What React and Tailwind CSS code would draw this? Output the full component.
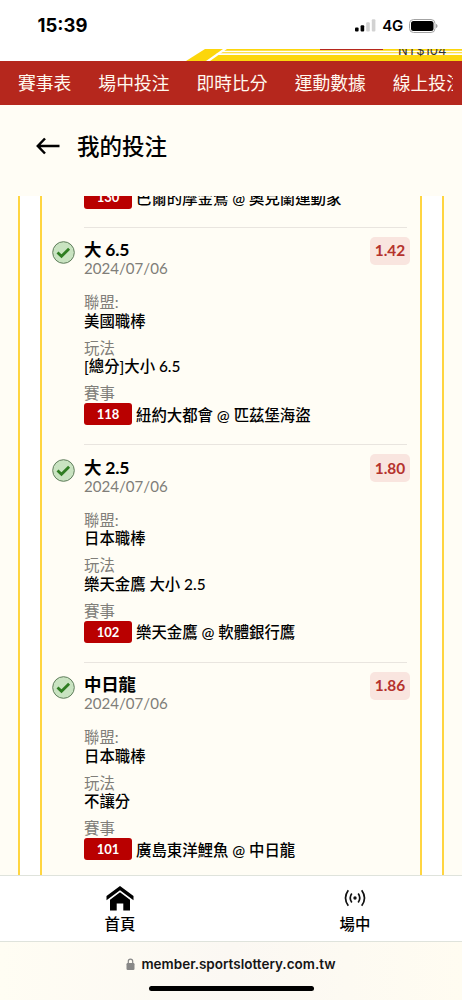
import React from 'react';

const navItems = ['賽事表', '場中投注', '即時比分', '運動數據', '線上投注'];

const bets = [
  { pick: '大 6.5', date: '2024/07/06', odds: '1.42', league: '美國職棒', play: '[總分]大小 6.5', code: '118', match: '紐約大都會 @ 匹茲堡海盜' },
  { pick: '大 2.5', date: '2024/07/06', odds: '1.80', league: '日本職棒', play: '樂天金鷹 大小 2.5', code: '102', match: '樂天金鷹 @ 軟體銀行鷹' },
  { pick: '中日龍', date: '2024/07/06', odds: '1.86', league: '日本職棒', play: '不讓分', code: '101', match: '廣島東洋鯉魚 @ 中日龍' },
];

const StatusBar = () => (
  <div className="flex h-[49px] shrink-0 items-center justify-between bg-white pl-[37.500px] pr-[24px] pt-[2px] font-['Inter']">
    <span className="text-[18.500px] font-bold leading-none">15:39</span>
    <div className="flex items-center">
      <svg width="21" height="13" viewBox="0 0 21 13">
        <rect x="0" y="8.500" width="3.600" height="4" rx="1" />
        <rect x="5.600" y="6.300" width="3.600" height="6.200" rx="1" />
        <rect x="11.200" y="3.300" width="3.600" height="9.200" rx="1" fill="#d2d2d2" />
        <rect x="16.800" y="0.300" width="3.600" height="12.200" rx="1" fill="#d2d2d2" />
      </svg>
      <span className="ml-[6px] text-[15px] font-semibold leading-none tracking-[-0.3px]">4G</span>
      <svg className="ml-[6px]" width="29" height="14" viewBox="0 0 29 14">
        <rect x="0.500" y="0.500" width="25.500" height="13" rx="4" fill="none" stroke="#a3a3a3" />
        <rect x="2" y="2" width="22.500" height="10" rx="2.500" />
        <path d="M27 5v4c1-.4 1.500-1.100 1.500-2s-.5-1.600-1.500-2z" fill="#a3a3a3" />
      </svg>
    </div>
  </div>
);

// Parte inferior de la cabecera, cortada por el scroll
const Banner = () => (
  <div className="relative h-[12px] shrink-0 overflow-hidden bg-white">
    <svg className="block" width="462" height="12" viewBox="0 0 462 12">
      <path d="M205 0H462V12H186z" fill="#fcd60c" />
      <path d="M223 1.700H462V3.300H221z" fill="#fff" />
      <path d="M217 4.200H462V6H216z" fill="#fff" />
      <path d="M223 0h4l-17 12h-4z" fill="#fff" />
      <path d="M320 0h63v1h-63z" fill="#b5271d" />
    </svg>
    <span className="absolute left-[398px] top-[-6px] font-['Inter'] text-[13px] leading-[14px] text-[#333]">NT$104</span>
  </div>
);

const CheckBadge = () => (
  <svg className="mt-[14.500px] shrink-0" width="23" height="23" viewBox="0 0 23 23">
    <circle cx="11.500" cy="11.500" r="10.800" fill="#c9e3c1" stroke="#5f7d5b" strokeWidth="1" />
    <path d="M5.500 11.500l4 3.800 7.600-7.600" fill="none" stroke="#2f7d22" strokeWidth="2.800" />
  </svg>
);

const Match = ({ code, name }) => (
  <div className="flex h-[22px] items-center whitespace-nowrap">
    <span className="flex h-[22px] w-[48px] items-center justify-center rounded-[3px] bg-[#b90000] pt-px text-[13px] font-bold text-white">{code}</span>
    <span className="ml-[4px] pt-[2px] text-[15.400px] font-medium text-black">{name}</span>
  </div>
);

const Field = ({ label, value }) => (
  <div className="mb-[8.500px] leading-[18.500px]">
    <p className="text-[#807e79]">{label}</p>
    <p className="font-medium text-black">{value}</p>
  </div>
);

const Bet = ({ bet }) => (
  <div className="flex h-[217.500px] gap-[9px] pl-[10px] pr-[13px] text-[15.400px]">
    <CheckBadge />
    <div className="flex-1 border-t border-[#e9e5df]">
      <div className="flex justify-between pt-[13.500px]">
        <div className="leading-[18px]">
          <h2 className="text-[17.500px] font-bold tracking-[-0.2px] text-black">{bet.pick}</h2>
          <p className="text-[15.100px] text-[#807e79]">{bet.date}</p>
        </div>
        <span className="-mr-[3px] -mt-[4.500px] flex h-[28px] w-[40px] items-center justify-center rounded-[5px] bg-[#f9e5df] pt-px font-bold text-[#b5322c]">{bet.odds}</span>
      </div>
      <div className="mt-[16.300px]">
        <Field label="聯盟:" value={bet.league} />
        <Field label="玩法" value={bet.play} />
        <p className="mb-[0.700px] leading-[18.500px] text-[#807e79]">賽事</p>
        <Match code={bet.code} name={bet.match} />
      </div>
    </div>
  </div>
);

const App = () => {
  return (
    <div className="flex h-[1000px] w-[462px] flex-col overflow-hidden bg-[#fffdf5] font-['Lato','Noto_Sans_CJK_TC',sans-serif] text-black">
      <StatusBar />
      <Banner />

      {/* MENÚ */}
      <nav className="h-[44px] shrink-0 bg-[#b5271d] pl-[18px] pr-[9px]">
        <div className="flex h-full items-center gap-[27px] overflow-hidden whitespace-nowrap text-[17.800px] text-[#fff8ee]">
          {navItems.map((item) => (
            <span key={item}>{item}</span>
          ))}
        </div>
      </nav>

      <header className="flex h-[91px] shrink-0 items-center gap-[17px] pb-[8px] pl-[36px]">
        <svg className="-mt-[2px]" width="24" height="18" viewBox="0 0 24 18" fill="none" stroke="#000" strokeWidth="2.500">
          <path d="M1.500 9H23.500M9 1.500L1.800 9L9 16.500" />
        </svg>
        <h1 className="pt-px text-[22.500px] font-medium leading-none">我的投注</h1>
      </header>

      {/* LISTA DE APUESTAS */}
      <main className="mx-[18px] h-[679px] shrink-0 overflow-hidden border-x-2 border-[#ffd541] bg-white px-[20px]">
        <div className="flow-root h-full w-[382px] overflow-hidden border-x-2 border-[#ffd541] bg-[#fffdf5]">
          <div className="-mt-[9.500px] mb-[18px] pl-[42px]">
            <Match code="130" name="巴爾的摩金鶯 @ 奧克蘭運動家" />
          </div>
          {bets.map((bet) => (
            <Bet key={bet.code} bet={bet} />
          ))}
        </div>
      </main>

      <footer className="flex h-[67px] shrink-0 border-y border-[#dfe3dc] bg-white text-[15.400px] font-medium">
        <div className="flex w-[240px] shrink-0 flex-col items-center pt-[9px]">
          <svg width="28" height="26" viewBox="0 0 28 26">
            <path d="M14 1L27.500 11v4.200L14 5.300.5 15.200V11z" />
            <path d="M14 7.300L24 14.700V25.500H17.300V18.500H10.700V25.500H4V14.700z" />
          </svg>
          <span className="mt-[3px] leading-[20px]">首頁</span>
        </div>
        <div className="flex w-[230px] shrink-0 flex-col items-center pt-[13px]">
          <svg width="22" height="18" viewBox="0 0 22 18" fill="none" stroke="#111" strokeWidth="1.700">
            <circle cx="11" cy="9" r="1.700" fill="#111" stroke="none" />
            <path d="M7.800 4.500q-3.200 4.500 0 9M14.200 4.500q3.200 4.500 0 9M4.300 1.200q-5.600 7.800 0 15.600M17.700 1.200q5.600 7.800 0 15.600" />
          </svg>
          <span className="mt-[7px] leading-[20px]">場中</span>
        </div>
      </footer>

      <div className="flex h-[58px] shrink-0 flex-col items-center bg-linear-to-r from-[#fffdf3] via-[#fbf8f3] to-[#fffcf1] font-['Inter']">
        <div className="mt-[12px] flex h-[20px] items-center">
          <svg width="9" height="12" viewBox="0 0 9 12">
            <rect x="0.500" y="5" width="8" height="7" rx="1.200" fill="#888" />
            <path d="M2.300 5.500V3.300a2.200 2.200 0 0 1 4.400 0V5.500" fill="none" stroke="#888" strokeWidth="1.200" />
          </svg>
          <span className="ml-[6px] text-[13.500px] font-semibold text-[#151515]">member.sportslottery.com.tw</span>
        </div>
        <div className="mt-[11.500px] h-[5px] w-[165px] rounded-full bg-black" />
      </div>
    </div>
  );
};

export default App;
